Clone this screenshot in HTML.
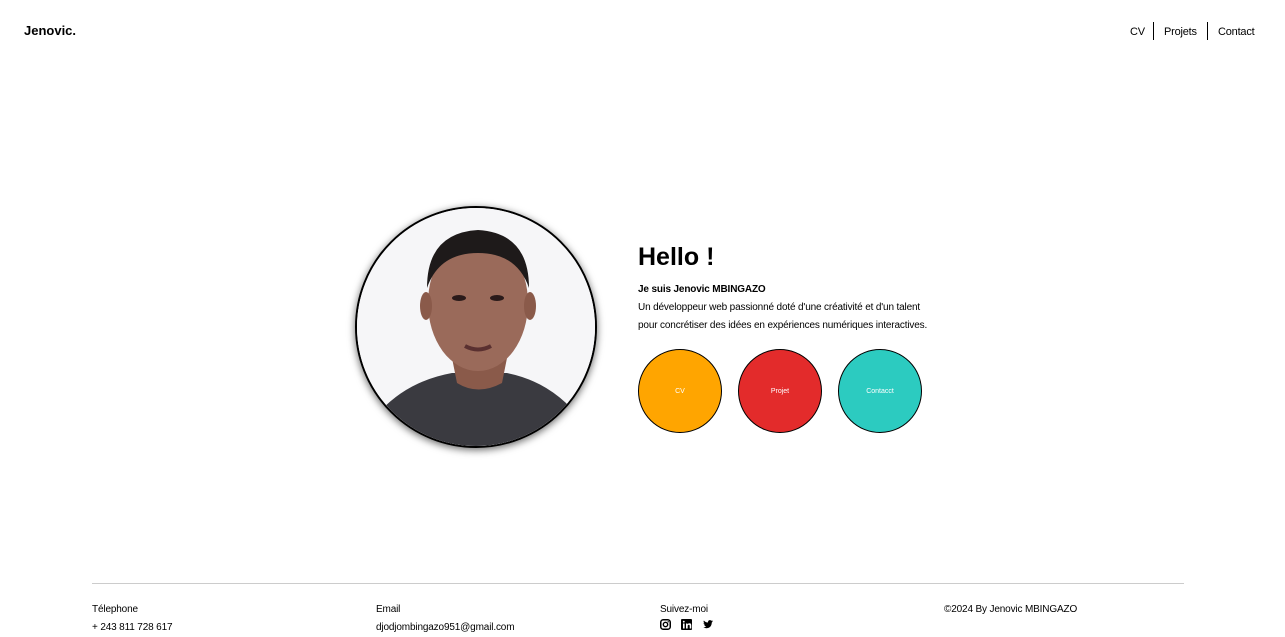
<!DOCTYPE html>
<html><head><meta charset="utf-8"><style>
*{margin:0;padding:0;box-sizing:border-box}
body{width:1285px;height:637px;background:#fff;font-family:"Liberation Sans",sans-serif;color:#000;position:relative;overflow:hidden}
.abs{position:absolute}
.logo{left:24px;top:22px;font-weight:bold;font-size:13px;line-height:18px}
.nav{top:23px;font-size:11px;line-height:18px;letter-spacing:-0.2px}
.sep{top:22px;width:1px;height:18px;background:#000}
.photo{left:355px;top:206px;width:242px;height:242px;border-radius:50%;border:2px solid #000;overflow:hidden;background:#fafafa;box-shadow:0 2px 8px rgba(0,0,0,.6)}
.t{font-size:10px;letter-spacing:-0.15px;line-height:18px}
.btn{top:349px;width:84px;height:84px;border-radius:50%;border:1px solid #000;color:#fff;font-size:7px;display:flex;align-items:center;justify-content:center}
.hr{left:92px;top:583px;width:1092px;height:1px;background:#ccc}
</style></head><body>
<div class="abs logo">Jenovic.</div>
<div class="abs nav" style="left:1130px">CV</div>
<div class="abs sep" style="left:1153px"></div>
<div class="abs nav" style="left:1164px">Projets</div>
<div class="abs sep" style="left:1207px"></div>
<div class="abs nav" style="left:1218px">Contact</div>

<div class="abs photo">
<svg width="242" height="242" viewBox="0 0 242 242">
<rect width="242" height="242" fill="#f6f6f8"/>
<path d="M10 220 Q40 175 95 165 L150 165 Q200 175 230 220 L242 242 L0 242Z" fill="#3a3a40"/>
<path d="M95 150 L100 175 Q121 188 145 175 L150 150Z" fill="#8a5a4a"/>
<ellipse cx="121" cy="95" rx="50" ry="68" fill="#9a6a5a"/>
<path d="M70 80 Q70 25 121 22 Q172 25 172 80 Q160 45 121 45 Q82 45 70 80Z" fill="#1e1a1a"/>
<ellipse cx="69" cy="98" rx="6" ry="14" fill="#8a5a4a"/>
<ellipse cx="173" cy="98" rx="6" ry="14" fill="#8a5a4a"/>
<ellipse cx="102" cy="90" rx="7" ry="3" fill="#2a1a1a"/>
<ellipse cx="140" cy="90" rx="7" ry="3" fill="#2a1a1a"/>
<path d="M108 138 Q121 145 134 138" stroke="#5a3030" stroke-width="4" fill="none"/>
</svg>
</div>

<div class="abs" style="left:638px;top:242px;font-size:25px;line-height:30px;font-weight:bold">Hello !</div>
<div class="abs t" style="left:638px;top:281px;font-weight:bold">Je suis Jenovic MBINGAZO</div>
<div class="abs t" style="left:638px;top:299px">Un développeur web passionné doté d'une créativité et d'un talent<br>pour concrétiser des idées en expériences numériques interactives.</div>

<div class="abs btn" style="left:638px;background:#ffa500">CV</div>
<div class="abs btn" style="left:738px;background:#e32b2b">Projet</div>
<div class="abs btn" style="left:838px;background:#2ccbc0">Contacct</div>

<div class="abs hr"></div>
<div class="abs t" style="left:92px;top:601px">Télephone<br>+ 243 811 728 617</div>
<div class="abs t" style="left:376px;top:601px">Email<br>djodjombingazo951@gmail.com</div>
<div class="abs t" style="left:660px;top:601px">Suivez-moi</div>
<svg class="abs" style="left:660px;top:619px" width="60" height="12" viewBox="0 0 60 12">
<rect x="0.75" y="0.75" width="9.5" height="9.5" rx="2.5" fill="none" stroke="#000" stroke-width="1.5"/>
<circle cx="5.5" cy="5.5" r="2.2" fill="none" stroke="#000" stroke-width="1.4"/>
<circle cx="8.2" cy="2.8" r="0.7"/>
<rect x="21" y="0" width="11" height="11" rx="1"/>
<rect x="23" y="4.5" width="1.6" height="5" fill="#fff"/><circle cx="23.8" cy="2.7" r="0.9" fill="#fff"/>
<path d="M26 4.5h1.5v0.8q0.6-1 2-1q1.8 0 1.8 2.2v3h-1.6v-2.7q0-1.1-0.9-1.1q-1.1 0-1.1 1.2v2.6H26z" fill="#fff"/>
<path d="M53 2q-0.6 0.3-1.2 0.4q0.7-0.4 0.9-1.1q-0.6 0.4-1.3 0.5q-0.6-0.7-1.5-0.7q-1.9 0-2 2.4q-2.5-0.1-4-2q-0.9 1.6 0.6 2.8q-0.5 0-0.9-0.3q0 1.6 1.6 2q-0.5 0.1-0.9 0q0.4 1.3 1.9 1.4q-1.4 1.1-3.1 0.9q1.4 0.9 3.1 0.9q5.2 0 5.6-5.7q0.6-0.4 1.2-1.5z"/>
</svg>
<div class="abs t" style="left:944px;top:601px">©2024 By Jenovic MBINGAZO</div>
</body></html>
